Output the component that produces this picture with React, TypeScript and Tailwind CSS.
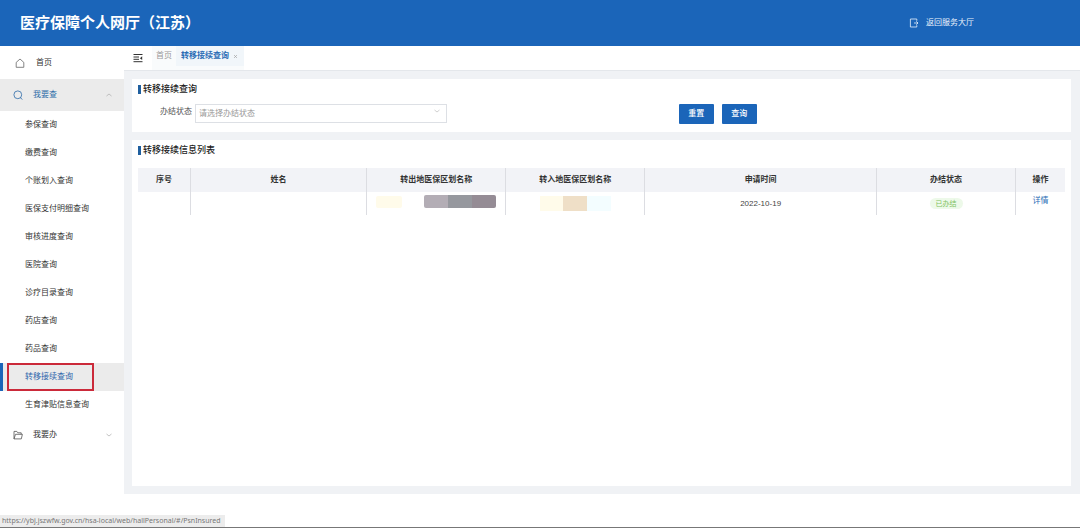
const queryItems = [
  "参保查询",
  "缴费查询",
  "个账划入查询",
  "医保支付明细查询",
  "审核进度查询",
  "医院查询",
  "诊疗目录查询",
  "药店查询",
  "药品查询",
  "转移接续查询",
  "生育津贴信息查询",
];

const activeItem = "转移接续查询";

const columns = [
  { title: "序号", width: "w-[51px]" },
  { title: "姓名", width: "w-[19%]" },
  { title: "转出地医保区划名称", width: "w-[15%]" },
  { title: "转入地医保区划名称", width: "w-[15%]" },
  { title: "申请时间", width: "w-[25%]" },
  { title: "办结状态", width: "w-[15%]" },
  { title: "操作", width: "w-[48px]" },
];

function HomeIcon() {
  return (
    <svg viewBox="0 0 10 10" className="h-[10px] w-[10px]" fill="none" stroke="#666" strokeWidth="0.8">
      <path d="M1.2 4.4 5 1l3.8 3.4v4.9H1.2z" strokeLinejoin="round" />
    </svg>
  );
}

function SearchIcon() {
  return (
    <svg viewBox="0 0 10 10" className="h-[10px] w-[10px]" fill="none" stroke="currentColor" strokeWidth="0.8">
      <circle cx="4.8" cy="4.8" r="3.9" />
      <path d="M7.5 7.6 9 9.3" strokeLinecap="round" />
    </svg>
  );
}

function FolderIcon() {
  return (
    <svg viewBox="0 0 10 10" className="h-[10px] w-[10px]" fill="none" stroke="#555" strokeWidth="0.8">
      <path d="M1 8.9V1.4h2.8l1 1.4h3.4v1.5M1 8.9l1.5-4.6h6.9L8.3 8.9z" strokeLinejoin="round" />
    </svg>
  );
}

function FoldIcon() {
  return (
    <svg viewBox="0 0 10 10" className="h-[10px] w-[10px]" fill="none" stroke="currentColor" strokeWidth="1">
      <path d="M0.5 1.5h9M0.5 4h5.5M0.5 6.3h5.5M0.5 8.7h9" />
      <path d="M9.2 3.3v3.8L6.9 5.2z" fill="currentColor" stroke="none" />
    </svg>
  );
}

function ExitIcon() {
  return (
    <svg viewBox="0 0 10 10" className="h-[10px] w-[10px]" fill="none" stroke="currentColor" strokeWidth="0.8">
      <path d="M7.8 2.8V1H1.4v8h6.4V7.2M5 5h4M7.3 3.3 9 5 7.3 6.7" />
    </svg>
  );
}

function Chevron({ up = false }: { up?: boolean }) {
  return (
    <svg viewBox="0 0 6 4" className="h-1 w-1.5" fill="none" stroke="currentColor" strokeWidth="0.7">
      <path d={up ? "M0.5 3 3 1l2.5 2" : "M0.5 1 3 3l2.5-2"} />
    </svg>
  );
}

function SectionTitle({ children }: { children: string }) {
  return (
    <h2 className="flex h-3 items-center gap-0.5 text-[9px] font-medium text-[#222]">
      <span className="h-[9px] w-[3px] bg-[#1f5f9f]" />
      {children}
    </h2>
  );
}

function Sidebar() {
  return (
    <nav className="w-[124px] shrink-0 bg-white text-[#333]">
      <a href="#home" className="flex h-[33px] items-center gap-[11px] pl-[15px]">
        <HomeIcon />
        首页
      </a>
      <button
        type="button"
        aria-expanded="true"
        className="flex h-8 w-full items-center gap-[10px] bg-[#ebebeb] pr-3 pl-[13px] text-[#2d6ba8]"
      >
        <SearchIcon />
        我要查
        <span className="ml-auto text-[#aaa]">
          <Chevron up />
        </span>
      </button>
      <ul>
        {queryItems.map((item) =>
          item === activeItem ? (
            <li key={item} className="relative bg-[#ebebeb]">
              <a
                href="#transfer"
                className="flex h-7 items-center border-l-[3px] border-[#1b65b9] pl-[22px] text-[#2d65ab]"
              >
                {item}
              </a>
              <span className="pointer-events-none absolute inset-y-0 right-[30px] left-[7px] border-2 border-[#cb2a3a]" />
            </li>
          ) : (
            <li key={item}>
              <a href="#query" className="flex h-7 items-center pl-[25px]">
                {item}
              </a>
            </li>
          ),
        )}
      </ul>
      <button type="button" aria-expanded="false" className="flex h-8 w-full items-center gap-[10px] pr-3 pl-[13px]">
        <FolderIcon />
        我要办
        <span className="ml-auto text-[#aaa]">
          <Chevron />
        </span>
      </button>
    </nav>
  );
}

function TabBar() {
  return (
    <div className="flex h-[25px] border-b border-[#e4e7eb] bg-white">
      <button type="button" aria-label="收起菜单" className="pr-[9px] pl-[9px] text-[#333]">
        <FoldIcon />
      </button>
      <div className="flex bg-[#f9fbfc] pb-1 text-[#999]">
        <a href="#home" className="flex items-center px-1">
          首页
        </a>
        <div className="flex items-center gap-1 bg-[#f1f6fa] pr-1.5 pl-[5px]">
          <a href="#transfer" className="font-bold text-[#2a6cb5]">
            转移接续查询
          </a>
          <button type="button" aria-label="关闭">
            <svg viewBox="0 0 5 5" className="h-[5px] w-[5px]" stroke="currentColor" strokeWidth="0.6">
              <path d="m1 1 3 3M4 1 1 4" />
            </svg>
          </button>
        </div>
      </div>
    </div>
  );
}

function QueryForm() {
  return (
    <section className="bg-white pt-1 pr-[6px] pb-2 pl-[6px]">
      <SectionTitle>转移接续查询</SectionTitle>
      <form className="mt-[9px] flex items-start" onSubmit={(e) => e.preventDefault()}>
        <label htmlFor="status" className="w-[57px] shrink-0 pt-0.5 pr-[3px] text-right text-[#555]">
          办结状态
        </label>
        <div className="relative w-[252px]">
          <select
            id="status"
            className="block h-[19px] w-full appearance-none border border-[#dde0e5] bg-white px-[3px] text-[#999]"
          >
            <option>请选择办结状态</option>
          </select>
          <span className="pointer-events-none absolute top-[5px] right-[7px] text-[#bbb]">
            <Chevron />
          </span>
        </div>
        <div className="ml-[25%] flex gap-2 font-medium text-white">
          <button type="reset" className="h-5 w-[35px] rounded-[1px] bg-[#1b65b9]">
            重置
          </button>
          <button type="submit" className="h-5 w-[35px] rounded-[1px] bg-[#1b65b9]">
            查询
          </button>
        </div>
      </form>
    </section>
  );
}

function ResultTable() {
  return (
    <table className="mt-3 w-full table-fixed text-center">
      <thead className="bg-[#f2f3f7] text-[#333]">
        <tr className="h-6 divide-x divide-[#dcdde2]">
          {columns.map((column) => (
            <th key={column.title} className={`${column.width} p-0 font-bold`}>
              {column.title}
            </th>
          ))}
        </tr>
      </thead>
      <tbody className="text-[#444]">
        <tr className="h-[23px] divide-x divide-[#dcdde2]">
          <td />
          <td />
          <td className="p-0">
            <div className="flex items-center justify-between pr-[9px] pb-1 pl-[9px]">
              <span className="h-3 w-[26px] rounded-xs bg-[#fffbea]" />
              <span className="flex h-[13px] overflow-hidden rounded-xs">
                <span className="w-6 bg-[#b3adb5]" />
                <span className="w-6 bg-[#96989e]" />
                <span className="w-6 bg-[#958c95]" />
              </span>
            </div>
          </td>
          <td className="p-0">
            <div className="flex h-[15px] justify-center">
              <span className="w-[23px] bg-[#fffbea]" />
              <span className="w-6 bg-[#efdfc7]" />
              <span className="w-6 bg-[#f3fdff]" />
            </div>
          </td>
          <td className="p-0">2022-10-19</td>
          <td className="p-0">
            <span className="rounded-full bg-[#edf9e9] px-1.5 py-0.5 text-[7px] text-[#7fc261]">已办结</span>
          </td>
          <td className="p-0 pb-1.5">
            <a href="#detail" className="text-[#2a6cb5]">
              详情
            </a>
          </td>
        </tr>
      </tbody>
    </table>
  );
}

export default function App() {
  return (
    <div className="flex min-h-screen flex-col bg-white font-['Liberation_Sans','Noto_Sans_CJK_SC',sans-serif] text-[8px] leading-3">
      <header className="flex h-[46px] items-center justify-between bg-[#1b65b9] pr-[106px] pl-5 text-white">
        <h1 className="text-[15px] leading-6 font-bold">医疗保障个人网厅（江苏）</h1>
        <a href="#hall" className="flex items-center gap-[7px] text-[#e8f1fb]">
          <ExitIcon />
          返回服务大厅
        </a>
      </header>
      <div className="flex flex-1">
        <Sidebar />
        <div className="flex min-w-0 flex-1 flex-col">
          <TabBar />
          <main className="flex flex-1 flex-col gap-2 bg-[#f0f2f5] py-2 pr-[9px] pl-2">
            <QueryForm />
            <section className="flex-1 bg-white px-[6px] pt-1">
              <SectionTitle>转移接续信息列表</SectionTitle>
              <ResultTable />
            </section>
          </main>
        </div>
      </div>
      <footer className="flex h-[34px] items-end border-b border-[#777]">
        <span className="bg-[#ececec] pr-1 pl-0.5 font-['Noto_Sans',sans-serif] text-[7px] text-[#777]">
          https://ybj.jszwfw.gov.cn/hsa-local/web/hallPersonal/#/PsnInsured
        </span>
      </footer>
    </div>
  );
}
